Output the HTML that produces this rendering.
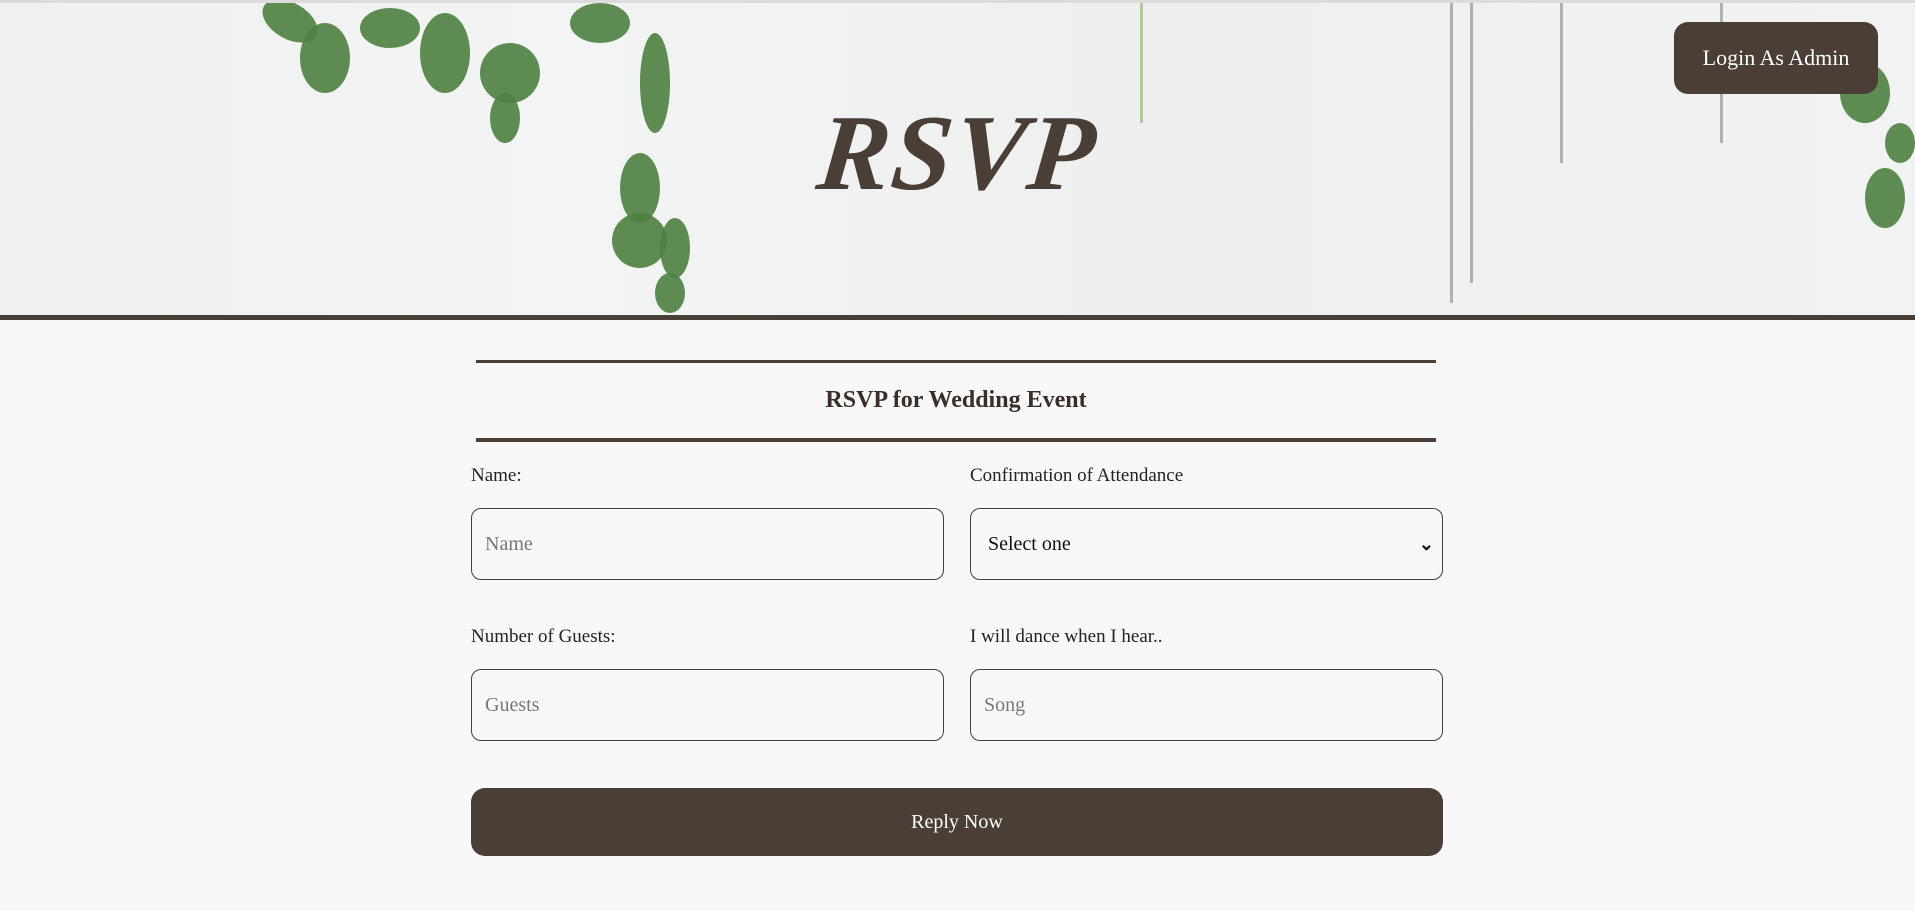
<!DOCTYPE html>
<html><head><meta charset="utf-8"><style>
*{box-sizing:border-box;margin:0;padding:0}
body{width:1915px;height:911px;background:#f8f8f8;font-family:"Liberation Serif",serif;color:#3a2f28;overflow:hidden;position:relative}
.hdr{position:absolute;left:0;top:0;width:1915px;height:315px;background:linear-gradient(90deg,#eef1ef,#f3f5f4 30%,#eef0ef 60%,#f1f3f2);border-top:3px solid #dcdcdc;overflow:hidden}
.bar{position:absolute;left:0;top:315px;width:1915px;height:5px;background:#4a3e36}
.leaf{position:absolute;background:#4e8040;border-radius:50%;opacity:.9}
.vine{position:absolute;background:#7d8a78;width:3px;opacity:.6}
.title{position:absolute;left:0;width:1915px;top:92px;text-align:center;font-family:"Liberation Serif",serif;font-style:italic;font-weight:bold;font-size:108px;letter-spacing:2px;color:#4a3e36;transform:skewX(-6deg)}
.login{position:absolute;left:1674px;top:22px;width:204px;height:72px;background:#4a3e36;color:#fff;border-radius:14px;font-size:22px;display:flex;align-items:center;justify-content:center}
.line{position:absolute;left:476px;width:960px;background:#4a3e36}
h2{position:absolute;left:476px;width:960px;top:387px;text-align:center;font-size:24px;font-weight:bold;color:#3a2f28}
.lbl{position:absolute;font-size:19px;color:#222}
.inp{position:absolute;width:473px;height:72px;border:1px solid #4a3e36;border-radius:10px;font-size:20px;color:#777;padding-left:13px;display:flex;align-items:center;background:#f8f8f8}
.btn{position:absolute;left:471px;top:788px;width:972px;height:68px;background:#4a3e36;border-radius:14px;color:#fff;font-size:20px;display:flex;align-items:center;justify-content:center}
</style></head><body>
<div class="hdr">
<div class="leaf" style="left:260px;top:0;width:60px;height:36px;transform:rotate(30deg)"></div>
<div class="leaf" style="left:300px;top:20px;width:50px;height:70px"></div>
<div class="leaf" style="left:360px;top:5px;width:60px;height:40px"></div>
<div class="leaf" style="left:420px;top:10px;width:50px;height:80px"></div>
<div class="leaf" style="left:480px;top:40px;width:60px;height:60px"></div>
<div class="leaf" style="left:490px;top:90px;width:30px;height:50px"></div>
<div class="leaf" style="left:570px;top:0;width:60px;height:40px"></div>
<div class="leaf" style="left:640px;top:30px;width:30px;height:100px"></div>
<div class="leaf" style="left:620px;top:150px;width:40px;height:70px"></div>
<div class="leaf" style="left:612px;top:210px;width:55px;height:55px"></div>
<div class="leaf" style="left:660px;top:215px;width:30px;height:60px"></div>
<div class="leaf" style="left:655px;top:270px;width:30px;height:40px"></div>
<div class="leaf" style="left:1840px;top:60px;width:50px;height:60px"></div>
<div class="leaf" style="left:1865px;top:165px;width:40px;height:60px"></div>
<div class="leaf" style="left:1885px;top:120px;width:30px;height:40px"></div>
<div class="vine" style="left:1450px;top:0;height:300px"></div>
<div class="vine" style="left:1470px;top:0;height:280px"></div>
<div class="vine" style="left:1560px;top:0;height:160px"></div>
<div class="vine" style="left:1720px;top:0;height:140px"></div>
<div class="vine" style="left:1140px;top:0;height:120px;background:#8aaa60"></div>
</div>
<div class="title">RSVP</div>
<div class="login">Login As Admin</div>
<div class="bar"></div>
<div class="line" style="top:360px;height:3px"></div>
<h2>RSVP for Wedding Event</h2>
<div class="line" style="top:438px;height:4px"></div>
<div class="lbl" style="left:471px;top:465px">Name:</div>
<div class="lbl" style="left:970px;top:465px">Confirmation of Attendance</div>
<div class="inp" style="left:471px;top:508px">Name</div>
<div class="inp" style="left:970px;top:508px;color:#111;padding-left:17px">Select one<span style="position:absolute;right:8px;font-size:18px;font-weight:bold">&#8964;</span></div>
<div class="lbl" style="left:471px;top:626px">Number of Guests:</div>
<div class="lbl" style="left:970px;top:626px">I will dance when I hear..</div>
<div class="inp" style="left:471px;top:669px">Guests</div>
<div class="inp" style="left:970px;top:669px">Song</div>
<div class="btn">Reply Now</div>
</body></html>
